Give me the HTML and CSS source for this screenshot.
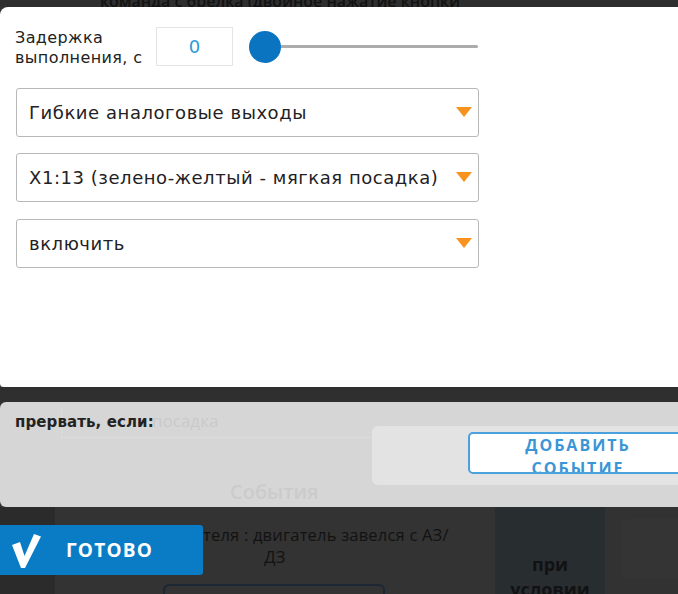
FILE: index.html
```html
<!DOCTYPE html>
<html lang="ru">
<head>
<meta charset="utf-8">
<link rel="stylesheet" href="styles.css">
</head>
<body>
<div class="page">
  <div class="topstrip"><div class="topstrip-text">команда с брелка (двойное нажатие кнопки</div></div>

  <div class="modal">
    <div class="delay-row">
      <div class="delay-label">Задержка<br>выполнения, с</div>
      <div class="delay-input">0</div>
      <div class="slider"><span class="thumb"></span><span class="track"></span></div>
    </div>
    <div class="select"><span class="select-text">Гибкие аналоговые выходы</span><span class="arrow"></span></div>
    <div class="select"><span class="select-text">X1:13 (зелено-желтый - мягкая посадка)</span><span class="arrow"></span></div>
    <div class="select"><span class="select-text">включить</span><span class="arrow"></span></div>
  </div>

  <div class="gap"></div>

  <div class="abort">
    <div class="ghost ghost-box"><span class="ghost-text">посадка</span></div>
    <div class="ghost ghost-title">События</div>
    <div class="abort-label">прервать, если:</div>
    <div class="add-area">
      <div class="add-btn">ДОБАВИТЬ<br>СОБЫТИЕ</div>
    </div>
  </div>

  <div class="bottom">
    <div class="col col-left"></div>
    <div class="col col-mid">
      <div class="event-line event-line-1">теля : двигатель завелся с АЗ/</div>
      <div class="event-line event-line-2">ДЗ</div>
      <div class="event-box"></div>
    </div>
    <div class="col col-cond"><div class="cond-text">при<br>условии</div></div>
    <div class="col col-right"><div class="right-card"></div></div>
  </div>

  <div class="done">
    <svg class="done-check" width="30" height="36" viewBox="0 0 30 36"><path d="M1 12 L9 9 L13.5 23 L23 1 L30 3.5 L14 35 L10 35 Z" fill="#fff"/></svg>
    <span class="done-text">ГОТОВО</span>
  </div>
</div>
</body>
</html>
```

FILE: styles.css
```css
* { box-sizing: border-box; }
html, body { margin: 0; padding: 0; }
body {
  background: #323232;
  width: 678px;
  height: 594px;
  overflow: hidden;
  font-family: "DejaVu Sans", Verdana, sans-serif;
}
.page {
  position: relative;
  width: 678px;
  height: 594px;
  display: flex;
  flex-direction: column;
}

/* top strip of background content */
.topstrip {
  height: 7px;
  overflow: hidden;
  background: #2e2e2e;
  padding-left: 100px;
}
.topstrip-text {
  font-family: "Open Sans", sans-serif;
  font-weight: 600;
  font-size: 16px;
  line-height: 20px;
  margin-top: -9px;
  color: #121212;
  white-space: nowrap;
}

/* modal */
.modal {
  background: #fff;
  height: 380px;
  border-radius: 8px 0 0 4px;
  padding: 20px 0 0 16px;
  box-shadow: 0 1px 0 #707070;
  display: flex;
  flex-direction: column;
}
.delay-row {
  display: flex;
  align-items: center;
  height: 39px;
  margin-bottom: 22px;
}
.delay-label {
  width: 141px;
  margin-left: -1px;
  font-size: 16px;
  letter-spacing: 0.4px;
  line-height: 20px;
  color: #222;
  padding-top: 2px;
}
.delay-input {
  width: 77px;
  height: 39px;
  border: 1px solid #e4e4e4;
  display: flex;
  align-items: center;
  justify-content: center;
  font-size: 18px;
  color: #2c9ad9;
}
.slider {
  margin-left: 16px;
  width: 229px;
  display: flex;
  align-items: center;
}
.thumb {
  width: 32px;
  height: 32px;
  border-radius: 50%;
  background: #0a74c1;
  flex: none;
}
.track {
  flex: 1;
  height: 3px;
  background: #acacac;
  border-radius: 0 2px 2px 0;
}

.select {
  width: 463px;
  height: 49px;
  border: 1px solid #b8b8b8;
  border-radius: 3px;
  display: flex;
  align-items: center;
  justify-content: space-between;
  padding: 0 6px 0 12px;
  margin-bottom: 16px;
}
.select + .select + .select { margin-top: 1px; }
.select-text {
  font-size: 18px;
  letter-spacing: 0.55px;
  color: #1f2124;
  white-space: nowrap;
}
.arrow {
  width: 0;
  height: 0;
  border-left: 8.5px solid transparent;
  border-right: 8.5px solid transparent;
  border-top: 10px solid #f7931e;
  margin-top: -1px;
  flex: none;
}

.gap {
  height: 15px;
  background: #2f2f2f;
}

/* abort panel */
.abort {
  position: relative;
  height: 105px;
  background: #d6d6d6;
  border-radius: 6px 0 0 6px;
  display: flex;
  justify-content: space-between;
  align-items: flex-start;
}
.ghost {
  position: absolute;
  font-family: "Open Sans", sans-serif;
  color: #cacaca;
  white-space: nowrap;
}
.ghost-box {
  left: 61px;
  top: 5px;
  width: 620px;
  height: 31px;
  border: 1px solid #dcdcdc;
  border-top: none;
  padding-left: 90px;
  font-size: 17px;
  line-height: 28px;
}
.ghost-title {
  left: 230px;
  top: 77px;
  font-size: 20px;
  font-weight: 600;
  line-height: 26px;
  color: #cbcbcb;
}
.abort-label {
  position: relative;
  margin: 10px 0 0 15px;
  font-weight: bold;
  font-size: 15px;
  letter-spacing: 0.1px;
  line-height: 20px;
  color: #232323;
}
.add-area {
  position: relative;
  width: 306px;
  height: 59px;
  margin-top: 24px;
  background: #e3e3e3;
  border-radius: 6px 0 0 6px;
  padding: 6px 0 0 96px;
}
.add-btn {
  width: 220px;
  height: 42px;
  background: #fff;
  border: 2px solid #4ba1de;
  border-radius: 5px;
  overflow: hidden;
  font-family: "Open Sans", sans-serif;
  font-weight: 700;
  font-size: 16px;
  letter-spacing: 2px;
  line-height: 23px;
  color: #3a96d6;
  text-align: center;
  padding-top: 0;
}

/* bottom background content */
.bottom {
  flex: 1;
  display: grid;
  grid-template-columns: 55px 440px 110px 1fr;
  overflow: hidden;
}
.col-left { background: #2b2b2b; }
.col-mid {
  background: #333;
  display: flex;
  flex-direction: column;
  padding-top: 17px;
}
.event-line {
  font-family: "Open Sans", sans-serif;
  font-size: 16.5px;
  letter-spacing: 0.2px;
  line-height: 22px;
  color: #121212;
  white-space: nowrap;
}
.event-line-1 { padding-left: 148px; }
.event-line-2 { text-align: center; }
.event-box {
  margin: 16px 0 0 108px;
  width: 222px;
  height: 30px;
  border: 2px solid #1b2833;
  border-radius: 6px;
}
.col-cond {
  background: #282d30;
  display: flex;
  justify-content: center;
  padding-top: 45px;
}
.cond-text {
  font-family: "Open Sans", sans-serif;
  font-weight: 700;
  font-size: 18px;
  line-height: 25px;
  color: #121212;
  text-align: center;
}
.col-right {
  background: #323232;
  padding: 12px 0 0 17px;
}
.right-card {
  height: 60px;
  background: #343434;
  border-radius: 4px 0 0 4px;
}

/* floating done button */
.done {
  position: absolute;
  left: 0;
  top: 525px;
  width: 203px;
  height: 50px;
  background: #0a7cc5;
  border-radius: 0 3px 3px 0;
  display: flex;
  align-items: center;
  padding-left: 11px;
}
.done-check { flex: none; margin-top: 1px; }
.done-text {
  margin-left: 25px;
  font-family: "Open Sans", sans-serif;
  font-weight: 700;
  font-size: 19px;
  letter-spacing: 1.2px;
  color: #fff;
}
```
